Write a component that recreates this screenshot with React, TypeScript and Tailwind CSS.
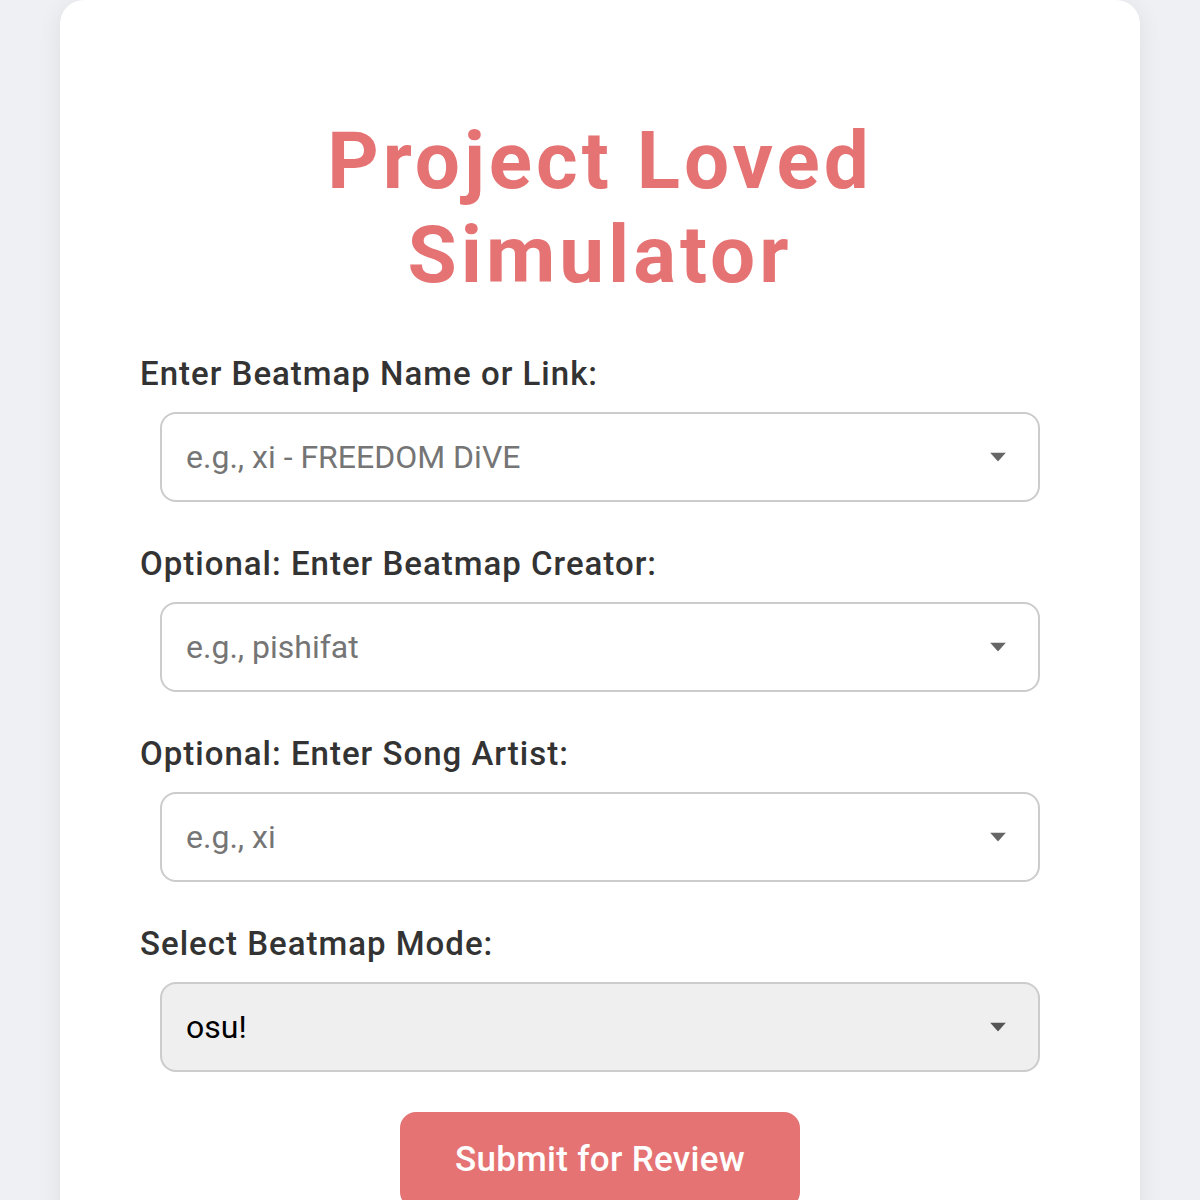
const Caret = ({ color }: { color: string }) => (
  <svg width="16" height="9" viewBox="0 0 16 9" className="pointer-events-none absolute right-[34px] top-1/2 -translate-y-1/2">
    <path d="M0 0h16L8 9z" fill={color} />
  </svg>
);

const Label = ({ children }: { children: string }) => (
  <label className="block text-[33px] leading-[36px] font-medium tracking-[1px] text-[#333]">{children}</label>
);

const Field = ({ label, placeholder }: { label: string; placeholder: string }) => (
  <div className="mb-[44px]">
    <Label>{label}</Label>
    <div className="relative mx-5 mt-5">
      <input
        type="text"
        placeholder={placeholder}
        className="block h-[90px] w-full rounded-2xl border-2 border-[#ccc] bg-white pl-6 pr-16 text-[32px] text-black outline-none placeholder:text-[#757575]"
      />
      <Caret color="#666" />
    </div>
  </div>
);

export default function App() {
  return (
    <div className="min-h-screen bg-[#eef0f4] px-[60px] font-['Roboto','Liberation_Sans',sans-serif]">
      <div className="rounded-3xl bg-white px-20 pt-[114px] pb-20 shadow-[0_4px_24px_rgba(0,0,0,0.08)]">
        <h1 className="mb-[54px] text-center text-[80px] leading-[94px] font-bold tracking-[4px] text-[#e57373]">
          Project Loved
          <br />
          Simulator
        </h1>
        <Field label="Enter Beatmap Name or Link:" placeholder="e.g., xi - FREEDOM DiVE" />
        <Field label="Optional: Enter Beatmap Creator:" placeholder="e.g., pishifat" />
        <Field label="Optional: Enter Song Artist:" placeholder="e.g., xi" />
        <div>
          <Label>Select Beatmap Mode:</Label>
          <div className="relative mx-5 mt-5">
            <div className="flex h-[90px] w-full items-center rounded-2xl border-2 border-[#ccc] bg-[#efefef] pl-6 text-[32px] text-black">
              osu!
            </div>
            <Caret color="#555" />
          </div>
        </div>
        <div className="mt-10 flex justify-center">
          <button className="h-24 w-[400px] rounded-2xl bg-[#e57373] text-[35px] font-medium tracking-[0.3px] text-white">
            Submit for Review
          </button>
        </div>
      </div>
    </div>
  );
}
